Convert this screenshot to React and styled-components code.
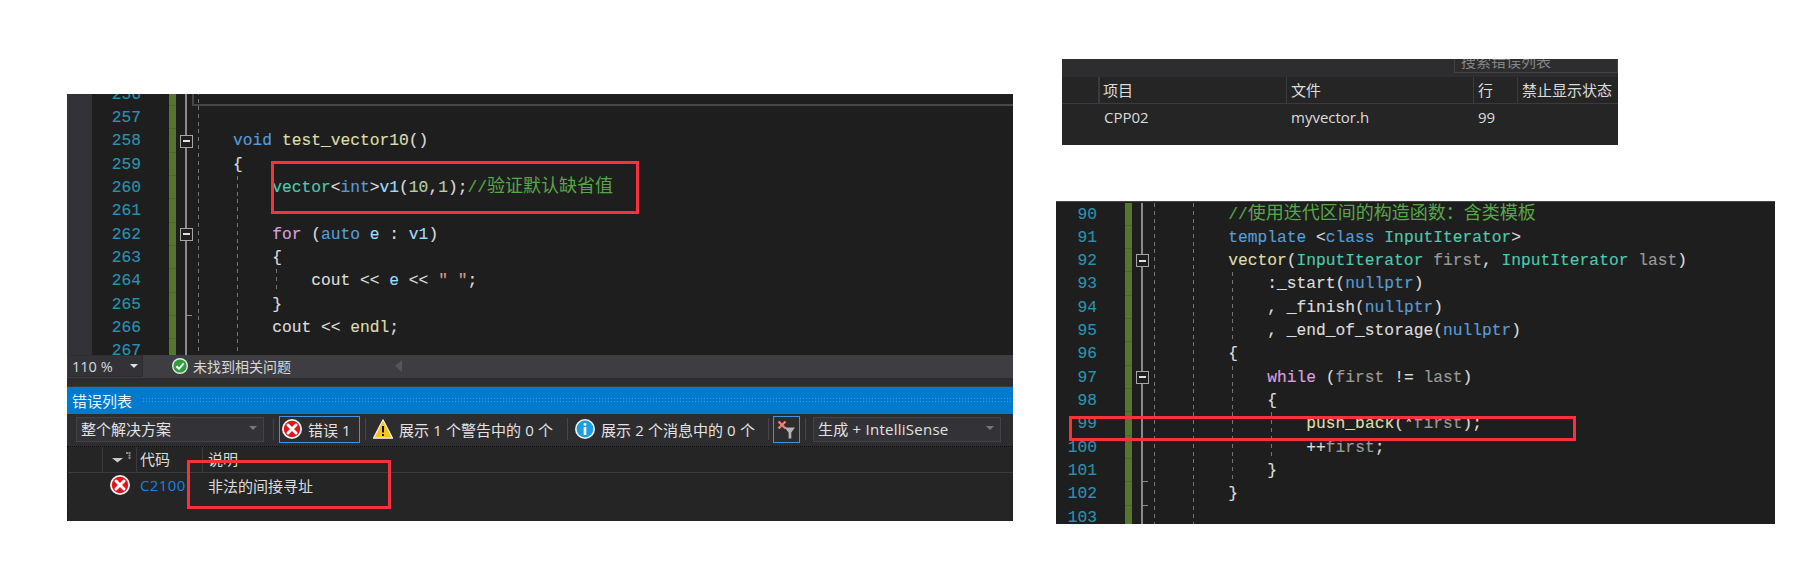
import React from 'react';
import styled, { createGlobalStyle } from 'styled-components';

const GlobalStyle = createGlobalStyle`
  html, body {
    margin: 0;
    padding: 0;
    background: #fff;
  }
`;

const UI_FONT = `"Open Sans", "Noto Sans CJK SC", sans-serif`;
const MONO_FONT = `"Liberation Mono", "Noto Sans CJK SC", monospace`;
const ROW_H = 23.33;
const INDENT_W = 39.08;

const COLORS = {
  kw: '#569cd6',
  fn: '#dcdcaa',
  type: '#4ec9b0',
  param: '#9a9a9a',
  comment: '#57a64a',
  plain: '#dcdcdc',
  str: '#d69d85',
  local: '#9cdcfe',
  ctrl: '#d8a0df',
  num: '#b5cea8',
};

const Page = styled.div`
  display: flex;
  align-items: flex-start;
  box-sizing: border-box;
  width: 1818px;
  height: 586px;
  padding: 59px 0 0 67px;
  overflow: hidden;
  background: #fff;
`;

const LeftPanel = styled.div`
  position: relative;
  width: 946px;
  height: 427px;
  margin-top: 35px;
  background: #252526;
  display: flex;
  flex-direction: column;
`;

const RightCol = styled.div`
  display: flex;
  flex-direction: column;
  margin-left: 43px;
`;

const ColsPanel = styled.div`
  width: 556px;
  height: 86px;
  margin-left: 6px;
  background: #252526;
  overflow: hidden;
  font: 15px ${UI_FONT};
  color: #dcdcdc;
`;

const SearchBar = styled.div`
  display: flex;
  justify-content: flex-end;
  height: 18px;
  background: #2d2d30;
  overflow: hidden;
`;

const SearchBox = styled.div`
  box-sizing: border-box;
  width: 164px;
  height: 14px;
  padding-left: 6px;
  border: 1px solid #434346;
  border-top: 0;
  line-height: 4px;
  color: #858585;
  overflow: hidden;
`;

const SourcePanel = styled.div`
  position: relative;
  width: 719px;
  height: 323px;
  margin-top: 56px;
  box-sizing: border-box;
  border-top: 1px solid #47474a;
`;

const Editor = styled.div`
  display: flex;
  flex-direction: column;
  flex: none;
  height: ${(p) => p.$h}px;
  padding-top: ${(p) => p.$top}px;
  box-sizing: border-box;
  background: #1e1e1e;
  overflow: hidden;
`;

const EditorInner = styled.div`
  margin-top: ${(p) => p.$shift}px;
`;

const Row = styled.div`
  display: flex;
  height: ${ROW_H}px;
  font: 16.28px/${ROW_H}px ${MONO_FONT};
  -webkit-text-stroke: 0.15px;
`;

const Strip = styled.div`
  flex: none;
  width: 25px;
  background: #333337;
`;

const LineNo = styled.div`
  flex: none;
  box-sizing: border-box;
  width: ${(p) => p.$w}px;
  text-align: right;
  color: #2b91af;
`;

const ChangeBar = styled.div`
  flex: none;
  box-sizing: border-box;
  width: 7px;
  margin-left: 28px;
  background: #56752f;
  border-bottom: 1px solid #4c6829;
`;

const Fold = styled.div`
  flex: none;
  display: flex;
  align-items: center;
  width: 18px;
  background:
    ${(p) => (p.$end ? 'linear-gradient(#8a8a8a, #8a8a8a) 9px 100% / 7px 1px no-repeat,' : '')}
    linear-gradient(#8a8a8a, #8a8a8a) 9px 0 / 2px 100% no-repeat;
`;

const FoldBox = styled.div`
  display: flex;
  align-items: center;
  justify-content: center;
  box-sizing: border-box;
  width: 13px;
  height: 13px;
  margin-left: 4px;
  background: #1e1e1e;
  border: 1px solid #a6a6a6;

  &::before {
    content: '';
    width: 7px;
    height: 2px;
    background: #e0e0e0;
  }
`;

const Code = styled.div`
  display: flex;
  flex: 1;
  white-space: pre;
  ${(p) => p.$edge && 'margin-left: -2px; border-left: 2px solid #474747; border-bottom: 2px solid #474747;'}
`;

const Guide = styled.div`
  flex: none;
  width: ${INDENT_W}px;
  background: repeating-linear-gradient(to bottom, #757575 0 4px, transparent 4px 8px) 4px 0 / 1px 100% no-repeat;
`;

const Token = styled.span`
  color: ${(p) => COLORS[p.$c]};
`;

const Cjk = styled.span`
  font-size: 18px;
  line-height: 1;
  -webkit-text-stroke: 0;
`;

const StatusBar = styled.div`
  display: flex;
  align-items: center;
  flex: none;
  box-sizing: border-box;
  height: 23px;
  padding-bottom: 1px;
  background: #3e3e42;
  font: 14px ${UI_FONT};
  color: #d8d8d8;
`;

const ZoomBox = styled.div`
  display: flex;
  align-items: center;
  justify-content: space-between;
  box-sizing: border-box;
  width: 75px;
  height: 22px;
  margin-left: 1px;
  padding: 0 4px 0 3px;
  background: #333337;
  border: 1px solid #2d2d30;
  font-size: 14.5px;
`;

const Caret = styled.span`
  width: 0;
  height: 0;
  border-left: 4px solid transparent;
  border-right: 4px solid transparent;
  border-top: 4px solid ${(p) => p.$c || '#e0e0e0'};
`;

const StatusText = styled.span`
  margin-left: 5px;
`;

const CheckWrap = styled.span`
  display: flex;
  margin-left: 29px;
`;

const ScrollArrow = styled.span`
  width: 0;
  height: 0;
  margin-left: 104px;
  border-top: 6px solid transparent;
  border-bottom: 6px solid transparent;
  border-right: 7px solid #55555a;
`;

const Splitter = styled.div`
  flex: none;
  height: 9px;
  box-sizing: border-box;
  background: #2d2d30;
  border-bottom: 1px solid #3a3a3d;
`;

const TitleBar = styled.div`
  display: flex;
  align-items: center;
  flex: none;
  box-sizing: border-box;
  height: 27px;
  padding: 0 0 1px 5px;
  background: #007acc;
  font: 15px ${UI_FONT};
  color: #e8f4fb;
`;

const Dots = styled.div`
  flex: 1;
  height: 7px;
  margin-left: 10px;
  background-image: radial-gradient(circle, #3c9edd 0.8px, transparent 1px);
  background-size: 3px 3px;
`;

const Toolbar = styled.div`
  display: flex;
  align-items: center;
  flex: none;
  height: 33px;
  box-sizing: border-box;
  padding-bottom: 2px;
  background: #2d2d30;
  border-bottom: 1px dotted #0c0c0c;
  font: 15px ${UI_FONT};
  color: #e2e2e2;
`;

const Combo = styled.div`
  display: flex;
  align-items: center;
  justify-content: space-between;
  box-sizing: border-box;
  width: ${(p) => p.$w}px;
  height: 25px;
  margin-left: ${(p) => p.$ml}px;
  padding: 0 6px 2px 4px;
  background: #333337;
  border: 1px solid #434346;
  letter-spacing: ${(p) => p.$track || 0}px;
`;

const Sep = styled.span`
  flex: none;
  width: 1px;
  height: 22px;
  margin: 0 ${(p) => p.$r ?? 7}px 0 ${(p) => p.$l ?? 5}px;
  background: #46464a;
`;

const ToggleBtn = styled.div`
  display: flex;
  align-items: center;
  justify-content: ${(p) => (p.$center ? 'center' : 'flex-start')};
  gap: 6px;
  box-sizing: border-box;
  width: ${(p) => p.$w}px;
  height: 27px;
  padding-left: ${(p) => (p.$center ? 0 : 2)}px;
  border: 1px solid #3f92e0;
`;

const Filter = styled.div`
  display: flex;
  align-items: center;
  gap: 6px;
  word-spacing: 0.3px;
`;

const Table = styled.div`
  flex: 1;
  background: #252526;
  border-left: 1px dotted #0c0c0c;
  font: 15px ${UI_FONT};
  color: #dcdcdc;
`;

const GridRow = styled.div`
  display: grid;
  grid-template-columns: ${(p) => p.$cols};
  height: ${(p) => p.$h}px;
  box-sizing: border-box;
  align-items: ${(p) => (p.$head ? 'stretch' : 'center')};
  ${(p) => (p.$head ? 'border-bottom: 1px solid #3a3a3f;' : 'padding-bottom: 2px;')}
`;

const HeadCell = styled.div`
  display: flex;
  align-items: center;
  padding-left: ${(p) => p.$pad ?? 5}px;
  padding-bottom: 2px;
  ${(p) => !p.$first && `border-left: ${p.$thick ? 2 : 1}px solid #3a3a3f;`}
`;

const Cell = styled.div`
  display: flex;
  align-items: center;
  padding-left: ${(p) => p.$pad ?? 6}px;
`;

const ErrorCode = styled(Cell)`
  color: #1384e0;
  letter-spacing: 0.4px;
`;

const RedBox = styled.div`
  position: absolute;
  left: ${(p) => p.$x}px;
  top: ${(p) => p.$y}px;
  width: ${(p) => p.$w}px;
  height: ${(p) => p.$h}px;
  box-sizing: border-box;
  border: 3px solid #f8323a;
  pointer-events: none;
`;

const ErrorIcon = ({ size = 20 }) => (
  <svg width={size} height={size} viewBox="0 0 20 20">
    <circle cx="10" cy="10" r="10" fill="#f2f2f2" />
    <circle cx="10" cy="10" r="8.2" fill="#e0161c" />
    <path d="M6 6 L14 14 M14 6 L6 14" stroke="#fff" strokeWidth="3" strokeLinecap="round" />
  </svg>
);

const WarningIcon = () => (
  <svg width="20" height="20" viewBox="0 0 20 20">
    <path d="M10 .8 L19.6 19.2 H.4 Z" fill="#f6c516" stroke="#f2f2f2" strokeWidth="1.2" strokeLinejoin="round" />
    <rect x="9" y="7" width="2" height="6.5" fill="#111" />
    <rect x="9" y="15" width="2" height="2" fill="#111" />
  </svg>
);

const InfoIcon = () => (
  <svg width="20" height="20" viewBox="0 0 20 20">
    <circle cx="10" cy="10" r="10" fill="#f2f2f2" />
    <circle cx="10" cy="10" r="8.4" fill="#1c9fe2" />
    <rect x="8.7" y="8" width="2.6" height="8" fill="#fff" />
    <rect x="8.7" y="4.2" width="2.6" height="2.4" fill="#fff" />
  </svg>
);

const CheckIcon = () => (
  <svg width="16" height="16" viewBox="0 0 16 16">
    <circle cx="8" cy="8" r="8" fill="#e6e6e6" />
    <circle cx="8" cy="8" r="6.6" fill="#2f9e3a" />
    <path d="M4.4 8.2 L7 10.8 L11.6 5.4" stroke="#fff" strokeWidth="2" fill="none" />
  </svg>
);

const FilterIcon = () => (
  <svg width="19" height="19" viewBox="0 0 19 19">
    <path d="M1.5 1.5 L8.5 8.5 M8.5 1.5 L1.5 8.5" stroke="#f0806a" strokeWidth="2.4" />
    <path d="M7.5 7.5 H18 L14.3 12.5 V18.5 H11.6 V12.5 Z" fill="#b4b4b4" />
  </svg>
);

const SortIcon = () => (
  <svg width="20" height="14" viewBox="0 0 20 14">
    <path d="M0 6 H11 L5.5 10.5 Z" fill="#c8c8c8" />
    <rect x="14" y="0" width="2" height="2" fill="#8c8c8c" />
    <rect x="16.5" y="0" width="2" height="2" fill="#8c8c8c" />
    <rect x="16.5" y="2.5" width="2" height="2" fill="#8c8c8c" />
    <rect x="16.5" y="5" width="2" height="2" fill="#8c8c8c" />
  </svg>
);

const leftLines = [
  { n: 256, indent: 1, edge: true },
  { n: 257, indent: 1 },
  { n: 258, indent: 1, fold: 'box', t: [['void', 'kw'], [' '], ['test_vector10', 'fn'], ['()']] },
  { n: 259, indent: 1, t: [['{']] },
  { n: 260, indent: 2, t: [['vector', 'type'], ['<'], ['int', 'kw'], ['>'], ['v1', 'local'], ['('], ['10', 'num'], [','], ['1', 'num'], [');'], ['//', 'comment'], ['验证默认缺省值', 'comment', true]] },
  { n: 261, indent: 2 },
  { n: 262, indent: 2, fold: 'box', t: [['for', 'ctrl'], [' ('], ['auto', 'kw'], [' '], ['e', 'local'], [' : '], ['v1', 'local'], [')']] },
  { n: 263, indent: 2, t: [['{']] },
  { n: 264, indent: 3, t: [['cout << '], ['e', 'local'], [' << '], ['" "', 'str'], [';']] },
  { n: 265, indent: 2, fold: 'end', t: [['}']] },
  { n: 266, indent: 2, t: [['cout << '], ['endl', 'fn'], [';']] },
  { n: 267, indent: 2 },
];

const rightLines = [
  { n: 90, indent: 2, t: [['//', 'comment'], ['使用迭代区间的构造函数\uFF1A含类模板', 'comment', true]] },
  { n: 91, indent: 2, t: [['template', 'kw'], [' <'], ['class', 'kw'], [' '], ['InputIterator', 'type'], ['>']] },
  { n: 92, indent: 2, fold: 'box', t: [['vector', 'fn'], ['('], ['InputIterator', 'type'], [' '], ['first', 'param'], [', '], ['InputIterator', 'type'], [' '], ['last', 'param'], [')']] },
  { n: 93, indent: 3, t: [[':_start('], ['nullptr', 'kw'], [')']] },
  { n: 94, indent: 3, t: [[', _finish('], ['nullptr', 'kw'], [')']] },
  { n: 95, indent: 3, t: [[', _end_of_storage('], ['nullptr', 'kw'], [')']] },
  { n: 96, indent: 2, t: [['{']] },
  { n: 97, indent: 3, fold: 'box', t: [['while', 'ctrl'], [' ('], ['first', 'param'], [' != '], ['last', 'param'], [')']] },
  { n: 98, indent: 3, t: [['{']] },
  { n: 99, indent: 4, t: [['push_back', 'fn'], ['(*'], ['first', 'param'], [');']] },
  { n: 100, indent: 4, t: [['++'], ['first', 'param'], [';']] },
  { n: 101, indent: 3, fold: 'end', t: [['}']] },
  { n: 102, indent: 2, fold: 'end', t: [['}']] },
  { n: 103, indent: 2 },
];

const CodeRow = ({ line, strip, numW }) => (
  <Row>
    {strip && <Strip />}
    <LineNo $w={numW}>{line.n}</LineNo>
    <ChangeBar />
    <Fold $end={line.fold === 'end'}>{line.fold === 'box' && <FoldBox />}</Fold>
    <Code $edge={line.edge}>
      {Array.from({ length: line.indent }, (_, i) => (
        <Guide key={i} />
      ))}
      {line.t &&
        line.t.map(([text, c = 'plain', big], i) => (
          <Token key={i} $c={c}>
            {big ? <Cjk>{text}</Cjk> : text}
          </Token>
        ))}
    </Code>
  </Row>
);

const ERROR_COLS = '34px 34px 66px 1fr';
const FILE_COLS = '36px 188px 187px 44px 1fr';

const App = () => {
  return (
    <>
      <GlobalStyle />
      <Page>
        <LeftPanel>
          <Editor $h={261} $top={0}>
            <EditorInner $shift={-11.3}>
              {leftLines.map((l) => (
                <CodeRow key={l.n} line={l} strip numW={49} />
              ))}
            </EditorInner>
          </Editor>
          <StatusBar>
            <ZoomBox>
              110 %
              <Caret />
            </ZoomBox>
            <CheckWrap>
              <CheckIcon />
            </CheckWrap>
            <StatusText>未找到相关问题</StatusText>
            <ScrollArrow />
          </StatusBar>
          <Splitter />
          <TitleBar>
            错误列表
            <Dots />
          </TitleBar>
          <Toolbar>
            <Combo $w={188} $ml={9}>
              整个解决方案
              <Caret $c="#77777a" />
            </Combo>
            <Sep $l={9} $r={5} />
            <ToggleBtn $w={81}>
              <ErrorIcon />
              错误 1
            </ToggleBtn>
            <Sep />
            <Filter>
              <WarningIcon />
              展示 1 个警告中的 0 个
            </Filter>
            <Sep $l={14} />
            <Filter>
              <InfoIcon />
              展示 2 个消息中的 0 个
            </Filter>
            <Sep $l={13} $r={4} />
            <ToggleBtn $w={27} $center>
              <FilterIcon />
            </ToggleBtn>
            <Sep $r={7} />
            <Combo $w={188} $ml={0} $track={0.25}>
              生成 + IntelliSense
              <Caret $c="#77777a" />
            </Combo>
          </Toolbar>
          <Table>
            <GridRow $cols={ERROR_COLS} $h={26} $head>
              <HeadCell $first />
              <HeadCell $pad={9}>
                <SortIcon />
              </HeadCell>
              <HeadCell $pad={3}>代码</HeadCell>
              <HeadCell>说明</HeadCell>
            </GridRow>
            <GridRow $cols={ERROR_COLS} $h={26}>
              <span />
              <Cell $pad={8}>
                <ErrorIcon />
              </Cell>
              <ErrorCode $pad={4}>C2100</ErrorCode>
              <Cell>非法的间接寻址</Cell>
            </GridRow>
          </Table>
          <RedBox $x={204} $y={67} $w={368} $h={53} />
          <RedBox $x={120} $y={366} $w={204} $h={49} />
        </LeftPanel>
        <RightCol>
          <ColsPanel>
            <SearchBar>
              <SearchBox>搜索错误列表</SearchBox>
            </SearchBar>
            <GridRow $cols={FILE_COLS} $h={27} $head>
              <HeadCell $first />
              <HeadCell $thick $pad={3}>
                项目
              </HeadCell>
              <HeadCell $pad={4}>文件</HeadCell>
              <HeadCell $pad={4}>行</HeadCell>
              <HeadCell $pad={4}>禁止显示状态</HeadCell>
            </GridRow>
            <GridRow $cols={FILE_COLS} $h={28}>
              <span />
              <Cell $pad={6}>CPP02</Cell>
              <Cell $pad={5}>myvector.h</Cell>
              <Cell $pad={5}>99</Cell>
              <span />
            </GridRow>
          </ColsPanel>
          <SourcePanel>
            <Editor $h={322} $top={0.5}>
              <EditorInner $shift={0}>
                {rightLines.map((l) => (
                  <CodeRow key={l.n} line={l} numW={41} />
                ))}
              </EditorInner>
            </Editor>
            <RedBox $x={13} $y={214} $w={507} $h={25} />
          </SourcePanel>
        </RightCol>
      </Page>
    </>
  );
};

export default App;
